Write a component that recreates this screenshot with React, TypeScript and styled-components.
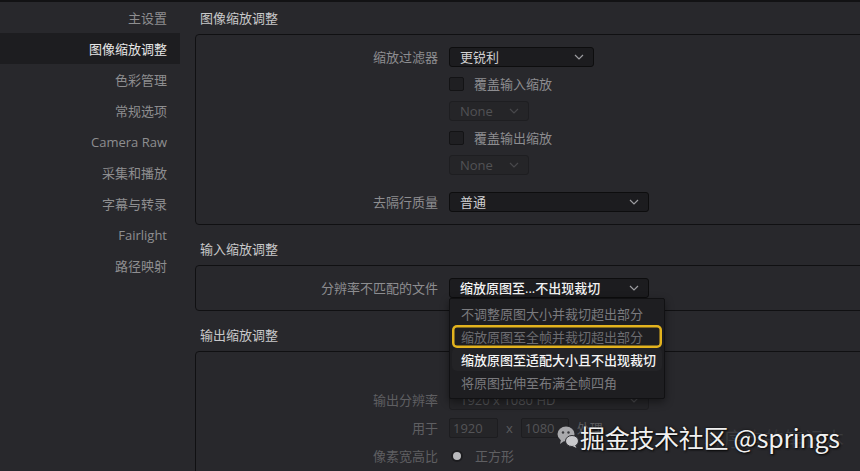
import type { FC } from 'react'
import styled, { createGlobalStyle } from 'styled-components'

// ─── Global ────────────────────────────────────────────────────────────────────

const GlobalStyle = createGlobalStyle`
  html, body {
    margin: 0;
    padding: 0;
    background: #28282c;
    overflow: hidden;
  }
  body {
    font-family: "Open Sans", "Noto Sans CJK SC", sans-serif;
    -webkit-font-smoothing: antialiased;
  }
  * { box-sizing: border-box; }
`

// ─── Layout ────────────────────────────────────────────────────────────────────

const Window = styled.div`
  position: relative;
  width: 860px;
  height: 471px;
  display: flex;
  align-items: flex-start;
  background: #28282c;
  border-top: 2px solid #121214;
  overflow: hidden;
`

const Sidebar = styled.nav`
  flex: 0 0 195px;
  display: flex;
  flex-direction: column;
`

const SideItem = styled.div<{ $active?: boolean }>`
  flex-shrink: 0;
  width: 180px;
  height: 31px;
  display: flex;
  align-items: center;
  justify-content: flex-end;
  padding-right: 13px;
  font-size: 13px;
  line-height: 16px;
  color: ${({ $active }) => ($active ? '#e6e6e6' : '#8e8e90')};
  background: ${({ $active }) => ($active ? '#1d1d20' : 'transparent')};
`

const Main = styled.main`
  flex: 0 0 690px;
  display: flex;
  flex-direction: column;
  & > * {
    flex-shrink: 0;
  }
`

const SectionTitle = styled.div<{ $first?: boolean }>`
  height: 32px;
  margin-top: ${({ $first }) => ($first ? '0' : '8px')};
  padding-left: 5px;
  display: flex;
  align-items: center;
  font-size: 13px;
  line-height: 16px;
  color: #c8c8ca;
`

const Panel = styled.section<{ $top?: number }>`
  border: 1px solid #101012;
  border-radius: 4px;
  padding: ${({ $top }) => $top ?? 12}px 0 12px;
`

const FormGrid = styled.div`
  display: grid;
  grid-template-columns: 242px 1fr;
  column-gap: 11px;
  row-gap: 10px;
  align-items: center;
`

const Label = styled.div<{ $dim?: boolean; $shift?: number }>`
  grid-column: 1;
  justify-self: end;
  margin-top: ${({ $shift }) => $shift ?? 0}px;
  font-size: 13px;
  line-height: 16px;
  color: ${({ $dim }) => ($dim ? '#5f5f62' : '#8d8d90')};
`

const Control = styled.div<{ $shift?: number; $gap?: number }>`
  grid-column: 2;
  display: flex;
  align-items: center;
  gap: ${({ $gap }) => $gap ?? 8}px;
  margin-top: ${({ $shift }) => $shift ?? 0}px;
`

// ─── Controls ──────────────────────────────────────────────────────────────────

const SelectWrap = styled.div`
  position: relative;
`

const SelectBox = styled.div<{ $width: number; $disabled?: boolean; $strong?: boolean }>`
  width: ${({ $width }) => $width}px;
  height: 20px;
  display: flex;
  align-items: center;
  justify-content: space-between;
  padding: 0 9px 0 10px;
  border-radius: 3px;
  font-size: 13px;
  line-height: 16px;
  font-weight: ${({ $strong }) => ($strong ? 500 : 400)};
  background: ${({ $disabled }) => ($disabled ? '#252528' : '#1c1c1f')};
  border: 1px solid ${({ $disabled }) => ($disabled ? '#1e1e21' : '#0d0d0e')};
  color: ${({ $disabled, $strong }) =>
    $disabled ? '#525255' : $strong ? '#f2f2f2' : '#cfcfd1'};
`

const Chevron: FC<{ color?: string }> = ({ color = '#9c9ca0' }) => (
  <svg width="10" height="6" viewBox="0 0 10 6" fill="none">
    <path d="M1 1 L5 5 L9 1" stroke={color} strokeWidth="1.2" />
  </svg>
)

const Select: FC<{
  value: string
  width: number
  disabled?: boolean
  strong?: boolean
}> = ({ value, width, disabled, strong }) => (
  <SelectBox $width={width} $disabled={disabled} $strong={strong}>
    <span>{value}</span>
    <Chevron color={disabled ? '#48484b' : '#9c9ca0'} />
  </SelectBox>
)

const CheckBox = styled.span`
  width: 15px;
  height: 14px;
  border-radius: 2px;
  background: #1f1f22;
  border: 1px solid #131315;
`

const CheckLabel = styled.span`
  margin-left: 2px;
  font-size: 13px;
  line-height: 14px;
  color: #8d8d90;
`

const Menu = styled.div`
  position: absolute;
  top: 100%;
  left: 0;
  z-index: 5;
  width: 216px;
  padding: 3px 0 4px;
  background: #1e1e21;
  border: 1px solid #111113;
  border-radius: 2px;
  box-shadow: 0 3px 8px rgba(0, 0, 0, 0.45);
`

const MenuItem = styled.div<{ $current?: boolean; $marked?: boolean }>`
  height: 23px;
  margin: 0 2px;
  padding-left: 9px;
  display: flex;
  align-items: center;
  font-size: 13px;
  line-height: 16px;
  border-radius: 5px;
  font-weight: ${({ $current }) => ($current ? 500 : 400)};
  color: ${({ $current, $marked }) =>
    $current ? '#f4f4f4' : $marked ? '#6c6c70' : '#7a7a7e'};
  background: ${({ $current }) => ($current ? '#232326' : 'transparent')};
  box-shadow: ${({ $marked }) => ($marked ? 'inset 0 0 0 2.5px #e3b31e' : 'none')};
`

const NumberBox = styled.div<{ $width: number }>`
  width: ${({ $width }) => $width}px;
  height: 20px;
  display: flex;
  align-items: center;
  padding-left: 3px;
  font-size: 13px;
  color: #545457;
  background: #252528;
  border: 1px solid #1d1d20;
  border-radius: 2px;
`

const DimText = styled.span`
  font-size: 13px;
  line-height: 16px;
  color: #5a5a5d;
`

const Radio = styled.span<{ $on?: boolean }>`
  width: 12px;
  height: 12px;
  margin-left: 2px;
  border-radius: 50%;
  background: ${({ $on }) => ($on ? '#b8b8bb' : '#1f1f22')};
  border: 2px solid #1c1c1f;
`

const RadioLabel = styled.span`
  margin-left: 12px;
  font-size: 13px;
  line-height: 16px;
  color: #5f5f62;
`

// ─── Watermark (overlay) ───────────────────────────────────────────────────────

const Watermark = styled.div`
  position: absolute;
  left: 557px;
  top: 419px;
  display: flex;
  align-items: center;
  gap: 1px;
  z-index: 10;
`

const WatermarkText = styled.span`
  font-family: "Noto Sans CJK SC", "Noto Sans", sans-serif;
  font-size: 25px;
  line-height: 32px;
  color: #f0f0f0;
  text-shadow: 1px 1px 2px rgba(0, 0, 0, 0.85), 0 0 3px rgba(0, 0, 0, 0.6);
  letter-spacing: -0.3px;
`

const GhostMark = styled.div`
  position: absolute;
  right: 16px;
  top: 424px;
  font-family: "Noto Sans CJK SC", sans-serif;
  font-size: 20px;
  line-height: 26px;
  color: rgba(255, 255, 255, 0.09);
  z-index: 9;
`

const WeChatIcon: FC = () => (
  <svg width="22" height="24" viewBox="0 0 22 24">
    <ellipse cx="9" cy="9" rx="8.5" ry="7.5" fill="#a9a9ac" />
    <path d="M4 14.5 L3 19 L7.5 15.8 Z" fill="#a9a9ac" />
    <circle cx="6" cy="7.5" r="1.2" fill="#3a3a3e" />
    <circle cx="11.5" cy="7.5" r="1.2" fill="#3a3a3e" />
    <ellipse cx="15" cy="16" rx="6.5" ry="5.5" fill="#c9c9cc" stroke="#2d2d31" strokeWidth="1" />
    <path d="M18 20 L19.5 23 L15.5 21 Z" fill="#c9c9cc" />
  </svg>
)

// ─── Data ──────────────────────────────────────────────────────────────────────

const SIDE_ITEMS = [
  '主设置',
  '图像缩放调整',
  '色彩管理',
  '常规选项',
  'Camera Raw',
  '采集和播放',
  '字幕与转录',
  'Fairlight',
  '路径映射',
]

const MISMATCH_OPTIONS = [
  '不调整原图大小并裁切超出部分',
  '缩放原图至全帧并裁切超出部分',
  '缩放原图至适配大小且不出现裁切',
  '将原图拉伸至布满全帧四角',
]

// ─── App ───────────────────────────────────────────────────────────────────────

const App: FC = () => {
  return (
    <>
      <GlobalStyle />
      <Window>
        <Sidebar>
          {SIDE_ITEMS.map((item) => (
            <SideItem key={item} $active={item === '图像缩放调整'}>
              {item}
            </SideItem>
          ))}
        </Sidebar>

        <Main>
          <SectionTitle $first>图像缩放调整</SectionTitle>
          <Panel>
            <FormGrid>
              <Label>缩放过滤器</Label>
              <Control>
                <Select value="更锐利" width={145} />
              </Control>

              <Control>
                <CheckBox />
                <CheckLabel>覆盖输入缩放</CheckLabel>
              </Control>

              <Control>
                <Select value="None" width={80} disabled />
              </Control>

              <Control>
                <CheckBox />
                <CheckLabel>覆盖输出缩放</CheckLabel>
              </Control>

              <Control>
                <Select value="None" width={80} disabled />
              </Control>

              <Label $shift={7}>去隔行质量</Label>
              <Control $shift={7}>
                <Select value="普通" width={200} />
              </Control>
            </FormGrid>
          </Panel>

          <SectionTitle>输入缩放调整</SectionTitle>
          <Panel>
            <FormGrid>
              <Label>分辨率不匹配的文件</Label>
              <Control>
                <SelectWrap>
                  <Select value="缩放原图至...不出现裁切" width={200} strong />
                  <Menu>
                    {MISMATCH_OPTIONS.map((opt, i) => (
                      <MenuItem key={opt} $marked={i === 1} $current={i === 2}>
                        {opt}
                      </MenuItem>
                    ))}
                  </Menu>
                </SelectWrap>
              </Control>
            </FormGrid>
          </Panel>

          <SectionTitle>输出缩放调整</SectionTitle>
          <Panel $top={14}>
            <FormGrid>
              {/* 下拉菜单遮住的勾选行 */}
              <Control>
                <CheckBox />
              </Control>

              <Label $dim>输出分辨率</Label>
              <Control>
                <Select value="1920 x 1080 HD" width={200} disabled />
              </Control>

              <Label $dim $shift={-2}>用于</Label>
              <Control $shift={-2}>
                <NumberBox $width={49}>1920</NumberBox>
                <DimText>x</DimText>
                <NumberBox $width={48}>1080</NumberBox>
                <DimText>处理</DimText>
              </Control>

              <Label $dim>像素宽高比</Label>
              <Control $gap={0}>
                <Radio $on />
                <RadioLabel>正方形</RadioLabel>
              </Control>

              <Control $shift={-5} $gap={0}>
                <Radio />
                <RadioLabel>16:9 变形</RadioLabel>
              </Control>
            </FormGrid>
          </Panel>
        </Main>

        <GhostMark>程序狗的笔记本</GhostMark>
        <Watermark>
          <WeChatIcon />
          <WatermarkText>掘金技术社区 @springs</WatermarkText>
        </Watermark>
      </Window>
    </>
  )
}

export default App
